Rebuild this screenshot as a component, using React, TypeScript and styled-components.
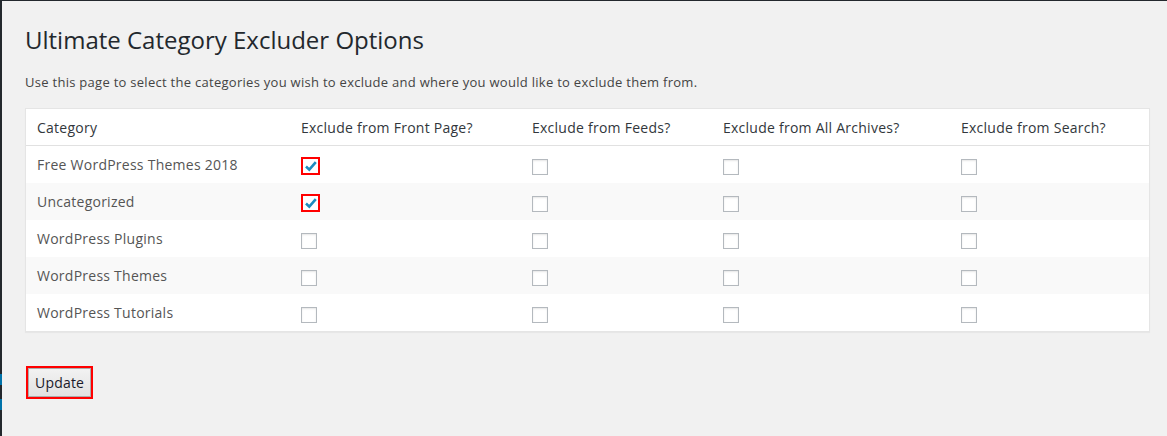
import React from "react"
import styled, { createGlobalStyle } from "styled-components"

const GlobalStyle = createGlobalStyle`
  html, body {
    margin: 0;
    padding: 0;
    background: #f1f1f1;
  }
  body {
    font-family: "Open Sans", "Noto Sans", sans-serif;
    color: #23282d;
  }
`

const Frame = styled.div`
  display: flex;
  min-height: 436px;
  border-top: 1px solid #23282d;
  box-sizing: border-box;
`

const AdminEdge = styled.div`
  width: 2px;
  background: #23282d;
  display: flex;
  flex-direction: column;
  padding-top: 373px;
  gap: 14px;
`

const EdgeMark = styled.span`
  display: block;
  height: 11px;
  background: #0073aa;
`

const Wrap = styled.main`
  flex: 1;
  padding: 20px 17px 0 23px;
`

const Title = styled.h1`
  margin: 0;
  font-size: 24px;
  font-weight: 400;
  line-height: 38px;
  letter-spacing: 0;
  color: #23282d;
`

const Intro = styled.p`
  margin: 14px 0 17px;
  font-size: 13px;
  line-height: 18px;
  color: #444;
  letter-spacing: 0.28px;
`

const Table = styled.div`
  background: #fff;
  border: 1px solid #e5e5e5;
  box-shadow: 0 1px 1px rgba(0, 0, 0, 0.04);
`

const Row = styled.div<{ $head?: boolean; $alt?: boolean }>`
  display: grid;
  grid-template-columns: 264px 231px 191px 238px 1fr;
  align-items: center;
  height: ${({ $head }) => ($head ? "36px" : "37px")};
  background: ${({ $alt }) => ($alt ? "#f9f9f9" : "#fff")};
  border-bottom: ${({ $head }) => ($head ? "1px solid #e1e1e1" : "none")};
`

const Cell = styled.div<{ $head?: boolean }>`
  padding: 0 11px;
  font-size: 14px;
  letter-spacing: 0.25px;
  color: ${({ $head }) => ($head ? "#32373c" : "#555")};
  white-space: nowrap;
`

const Mark = styled.span<{ $flagged?: boolean }>`
  display: inline-flex;
  align-items: center;
  justify-content: center;
  box-sizing: border-box;
  width: ${({ $flagged }) => ($flagged ? "19px" : "16px")};
  height: ${({ $flagged }) => ($flagged ? "18px" : "16px")};
  border: ${({ $flagged }) =>
    $flagged ? "2px solid #ff0000" : "1px solid #b4b9be"};
  background: #fff;
  box-shadow: ${({ $flagged }) =>
    $flagged ? "none" : "inset 0 1px 2px rgba(0, 0, 0, 0.1)"};
  vertical-align: middle;
  margin-top: 3px;
`

const Footer = styled.div`
  padding-top: 34px;
`

const Outline = styled.span`
  display: inline-block;
  border: 2px solid #ff0000;
  margin-left: 1px;
`

const Button = styled.button`
  display: block;
  height: 29px;
  padding: 0 6px;
  font-family: "Open Sans", "Noto Sans", sans-serif;
  font-size: 14px;
  letter-spacing: 0.2px;
  color: #1a1a2a;
  background: linear-gradient(#f2f2f2, #e2e2e2);
  border: 1px solid #acacac;
  border-radius: 0;
  cursor: pointer;
`

const Tick = () => (
  <svg width="14" height="12" viewBox="0 0 14 12">
    <path
      d="M2 6.5 L5.3 9.6 L11.8 2.2"
      fill="none"
      stroke="#1e8cbe"
      strokeWidth="2.6"
    />
  </svg>
)

const columns = [
  "Exclude from Front Page?",
  "Exclude from Feeds?",
  "Exclude from All Archives?",
  "Exclude from Search?",
]

const categories = [
  { name: "Free WordPress Themes 2018", front: true },
  { name: "Uncategorized", front: true },
  { name: "WordPress Plugins", front: false },
  { name: "WordPress Themes", front: false },
  { name: "WordPress Tutorials", front: false },
]

const App: React.FC = () => (
  <>
    <GlobalStyle />
    <Frame>
      <AdminEdge>
        <EdgeMark />
        <EdgeMark />
      </AdminEdge>
      <Wrap>
        <Title>Ultimate Category Excluder Options</Title>
        <Intro>
          Use this page to select the categories you wish to exclude and where
          you would like to exclude them from.
        </Intro>
        <Table>
          <Row $head>
            <Cell $head>Category</Cell>
            {columns.map((c) => (
              <Cell $head key={c}>
                {c}
              </Cell>
            ))}
          </Row>
          {categories.map((cat, i) => (
            <Row key={cat.name} $alt={i % 2 === 1}>
              <Cell>{cat.name}</Cell>
              {columns.map((c, j) => {
                const on = j === 0 && cat.front
                return (
                  <Cell key={c}>
                    <Mark $flagged={on}>{on && <Tick />}</Mark>
                  </Cell>
                )
              })}
            </Row>
          ))}
        </Table>
        <Footer>
          <Outline>
            <Button type="button">Update</Button>
          </Outline>
        </Footer>
      </Wrap>
    </Frame>
  </>
)

export default App
